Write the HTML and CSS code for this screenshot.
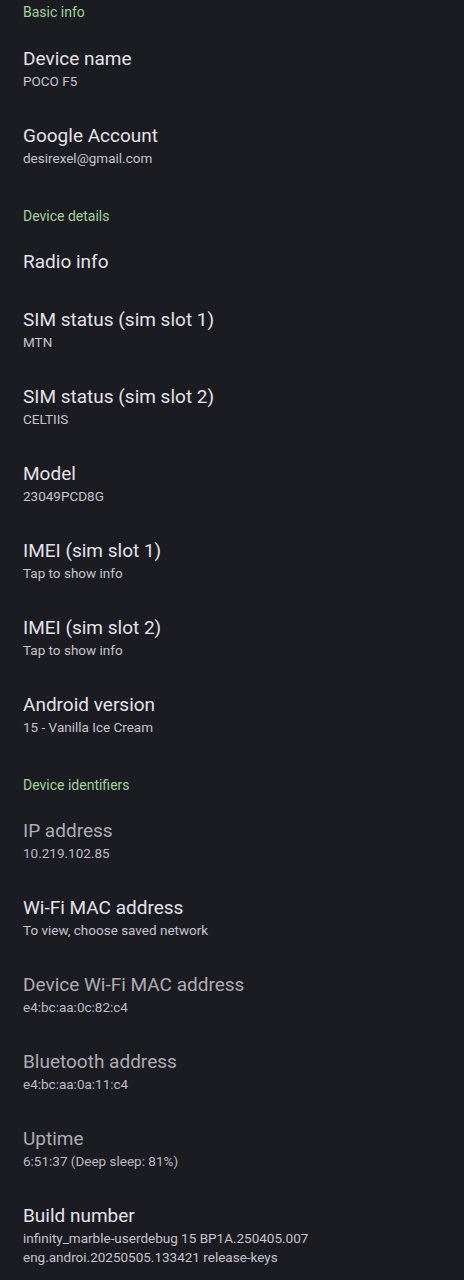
FILE: index.html
```html
<!DOCTYPE html>
<html>
<head>
    <title>About phone</title>
    <link rel="stylesheet" href="styles.css">
</head>
<body>
    <div class="settings">
        <!-- Basic info -->
        <div class="section-title first">Basic info</div>
        <div class="pref">
            <div class="pref-title">Device name</div>
            <div class="pref-summary">POCO F5</div>
        </div>
        <div class="pref">
            <div class="pref-title">Google Account</div>
            <div class="pref-summary">desirexel@gmail.com</div>
        </div>

        <!-- Device details -->
        <div class="section-title">Device details</div>
        <div class="pref">
            <div class="pref-title">Radio info</div>
        </div>
        <div class="pref">
            <div class="pref-title">SIM status (sim slot 1)</div>
            <div class="pref-summary">MTN</div>
        </div>
        <div class="pref">
            <div class="pref-title">SIM status (sim slot 2)</div>
            <div class="pref-summary">CELTIIS</div>
        </div>
        <div class="pref">
            <div class="pref-title">Model</div>
            <div class="pref-summary">23049PCD8G</div>
        </div>
        <div class="pref">
            <div class="pref-title">IMEI (sim slot 1)</div>
            <div class="pref-summary">Tap to show info</div>
        </div>
        <div class="pref">
            <div class="pref-title">IMEI (sim slot 2)</div>
            <div class="pref-summary">Tap to show info</div>
        </div>
        <div class="pref">
            <div class="pref-title">Android version</div>
            <div class="pref-summary">15 - Vanilla Ice Cream</div>
        </div>

        <!-- Device identifiers -->
        <div class="section-title">Device identifiers</div>
        <div class="pref disabled">
            <div class="pref-title">IP address</div>
            <div class="pref-summary">10.219.102.85</div>
        </div>
        <div class="pref">
            <div class="pref-title">Wi-Fi MAC address</div>
            <div class="pref-summary">To view, choose saved network</div>
        </div>
        <div class="pref disabled">
            <div class="pref-title">Device Wi-Fi MAC address</div>
            <div class="pref-summary">e4:bc:aa:0c:82:c4</div>
        </div>
        <div class="pref disabled">
            <div class="pref-title">Bluetooth address</div>
            <div class="pref-summary">e4:bc:aa:0a:11:c4</div>
        </div>
        <div class="pref disabled">
            <div class="pref-title">Uptime</div>
            <div class="pref-summary">6:51:37 (Deep sleep: 81%)</div>
        </div>
        <div class="pref">
            <div class="pref-title">Build number</div>
            <div class="pref-summary">infinity_marble-userdebug 15 BP1A.250405.007<br>eng.androi.20250505.133421 release-keys</div>
        </div>
    </div>
</body>
</html>
```

FILE: styles.css
```css
html, body {
    background-color: #1b1b22;
}
body {
    margin: 0;
    font-family: Roboto, "Noto Sans", sans-serif;
    color: #e5e2ea;
}
.settings {
    width: 100%;
}
.section-title {
    padding: 23px 23px 8px;
    font-size: 14px;
    line-height: 18px;
    color: #a3d29b;
}
.section-title.first {
    padding-top: 3px;
    padding-bottom: 9px;
}
.pref {
    padding: 16px 23px;
}
.pref-title {
    font-size: 19px;
    line-height: 26px;
    color: #e5e2ea;
}
.pref-summary {
    font-size: 13.5px;
    line-height: 19px;
    color: #c6c3cc;
}
.pref.disabled .pref-title {
    color: #aeacb4;
}
.pref.disabled .pref-summary {
    color: #bdbac2;
}
```
